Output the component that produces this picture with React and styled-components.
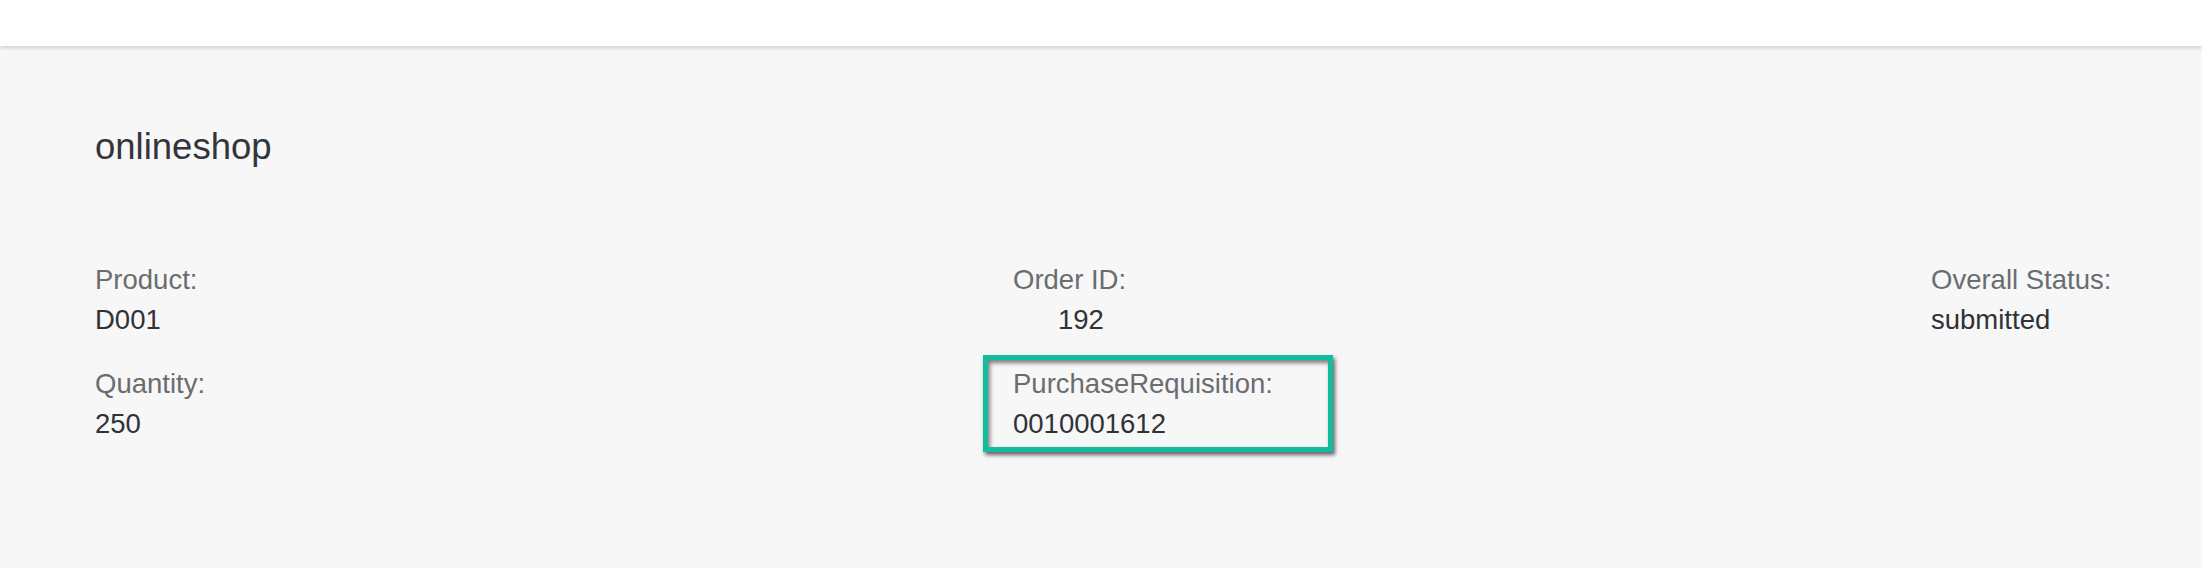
import React from 'react';
import styled, { createGlobalStyle } from 'styled-components';

const GlobalStyle = createGlobalStyle`
  html, body {
    margin: 0;
    padding: 0;
    background: #f7f7f7;
  }
  body {
    font-family: "Liberation Sans", Arial, sans-serif;
    min-height: 568px;
  }
`;

const Page = styled.div`
  min-height: 568px;
  background: #f7f7f7;
`;

const ShellBar = styled.header`
  height: 46px;
  background: #ffffff;
  box-shadow: 0 2px 4px rgba(0, 0, 0, 0.16);
  position: relative;
  z-index: 1;
`;

const Content = styled.main`
  padding: 79px 95px 0 95px;
`;

const Title = styled.h1`
  margin: 0;
  font-size: 36.5px;
  line-height: 44px;
  font-weight: 400;
  color: #32363a;
`;

const FormGrid = styled.div`
  display: grid;
  grid-template-columns: 918px 918px auto;
  margin-top: 91px;
`;

const Column = styled.div`
  display: flex;
  flex-direction: column;
  gap: 24px;
`;

const Field = styled.div`
  position: relative;
  display: flex;
  flex-direction: column;
`;

const Label = styled.span`
  font-size: 27.5px;
  line-height: 40px;
  color: #6a6d70;
  white-space: nowrap;
`;

const Value = styled.span`
  font-size: 27.5px;
  line-height: 40px;
  color: #2f3337;
  padding-left: ${(props) => props.indent || 0}px;
  white-space: nowrap;
`;

// annotation frame drawn over the field in the screenshot
const Highlight = styled.div`
  position: absolute;
  top: -9px;
  left: -30px;
  width: 350px;
  height: 97px;
  box-sizing: border-box;
  border: 5px solid #14bc9e;
  box-shadow: 2px 3px 4px rgba(0, 0, 0, 0.6), inset 2px 3px 4px rgba(0, 0, 0, 0.5);
  pointer-events: none;
`;

const columns = [
  [
    { label: 'Product:', value: 'D001' },
    { label: 'Quantity:', value: '250' },
  ],
  [
    { label: 'Order ID:', value: '192', indent: 45 },
    { label: 'PurchaseRequisition:', value: '0010001612', highlight: true },
  ],
  [
    { label: 'Overall Status:', value: 'submitted' },
  ],
];

export default function App() {
  return (
    <Page>
      <GlobalStyle />
      <ShellBar />
      <Content>
        <Title>onlineshop</Title>
        <FormGrid>
          {columns.map((fields, i) => (
            <Column key={i}>
              {fields.map((f) => (
                <Field key={f.label}>
                  <Label>{f.label}</Label>
                  <Value indent={f.indent}>{f.value}</Value>
                  {f.highlight && <Highlight />}
                </Field>
              ))}
            </Column>
          ))}
        </FormGrid>
      </Content>
    </Page>
  );
}
